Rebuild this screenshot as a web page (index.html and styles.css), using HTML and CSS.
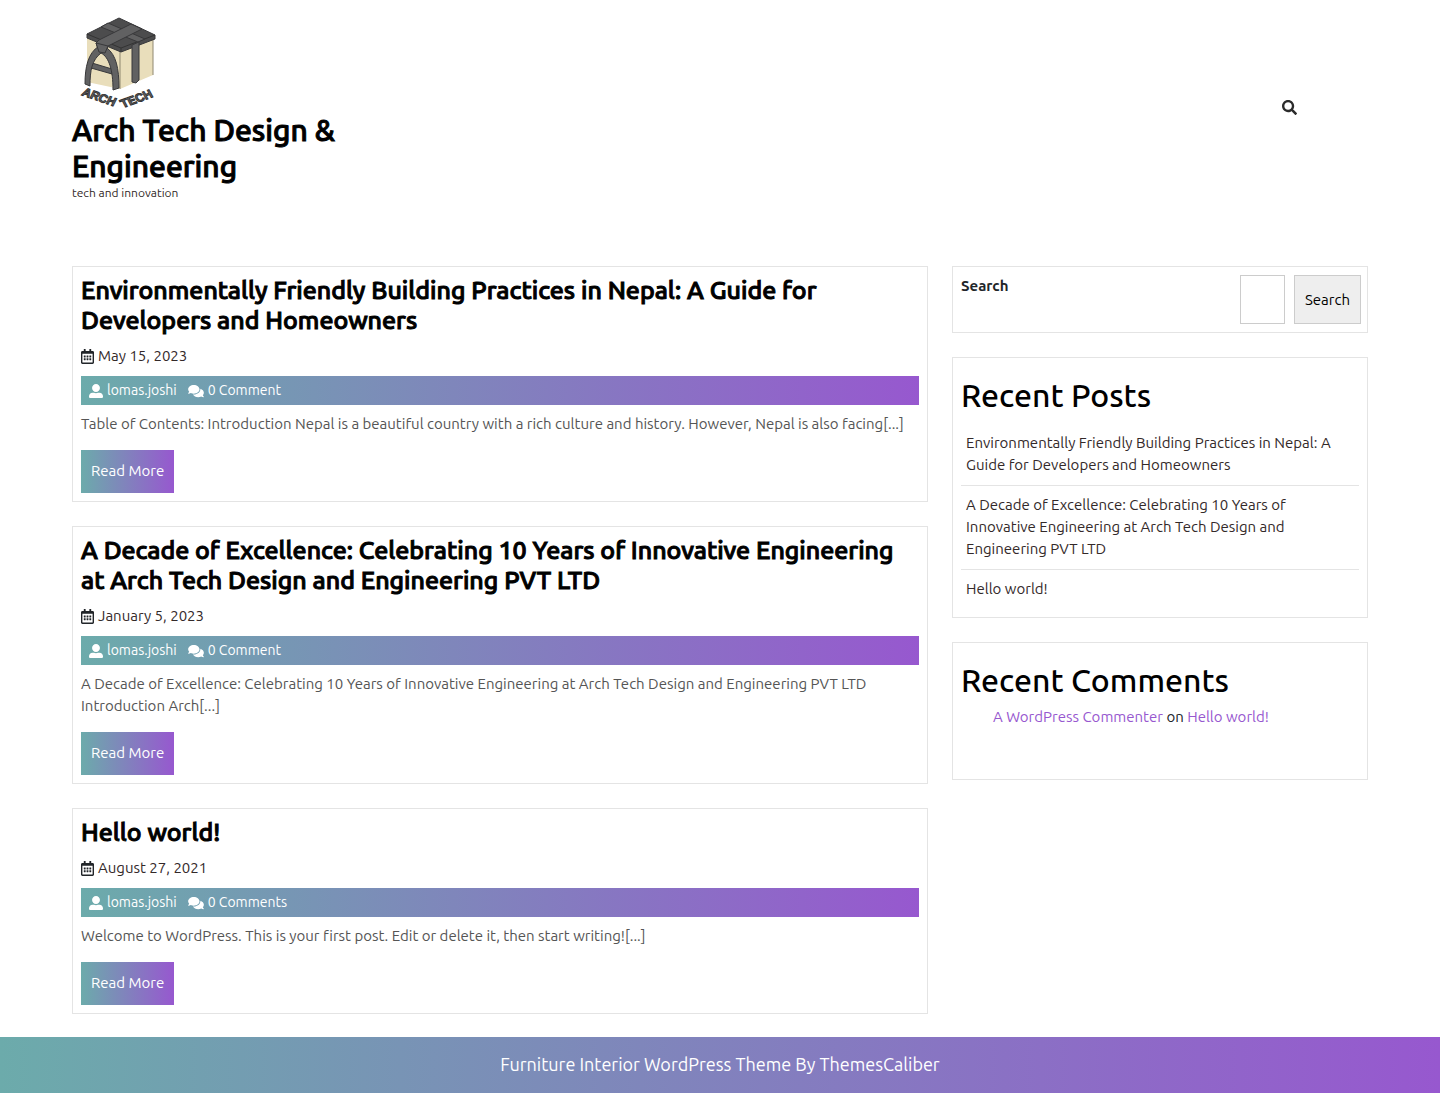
FILE: index.html
```html
<!DOCTYPE html>
<html lang="en">
<head>
<meta charset="utf-8">
<meta name="viewport" content="width=device-width, initial-scale=1">
<title>Arch Tech Design &amp; Engineering</title>
<link rel="stylesheet" href="styles.css">
</head>
<body>
<svg class="sprite" aria-hidden="true">
  <symbol id="calendar" viewBox="0 0 448 512"><path d="M148 288h-40c-6.600 0-12-5.400-12-12v-40c0-6.600 5.400-12 12-12h40c6.600 0 12 5.400 12 12v40c0 6.600-5.400 12-12 12zm108-12v-40c0-6.600-5.400-12-12-12h-40c-6.600 0-12 5.400-12 12v40c0 6.600 5.400 12 12 12h40c6.600 0 12-5.400 12-12zm96 0v-40c0-6.600-5.400-12-12-12h-40c-6.600 0-12 5.400-12 12v40c0 6.600 5.400 12 12 12h40c6.600 0 12-5.400 12-12zm-96 96v-40c0-6.600-5.400-12-12-12h-40c-6.600 0-12 5.400-12 12v40c0 6.600 5.400 12 12 12h40c6.600 0 12-5.400 12-12zm-96 0v-40c0-6.600-5.400-12-12-12h-40c-6.600 0-12 5.400-12 12v40c0 6.600 5.400 12 12 12h40c6.600 0 12-5.400 12-12zm192 0v-40c0-6.600-5.400-12-12-12h-40c-6.600 0-12 5.400-12 12v40c0 6.600 5.400 12 12 12h40c6.600 0 12-5.400 12-12zm96-260v352c0 26.500-21.500 48-48 48H48c-26.500 0-48-21.500-48-48V112c0-26.500 21.500-48 48-48h48V12c0-6.600 5.400-12 12-12h40c6.600 0 12 5.400 12 12v52h128V12c0-6.600 5.400-12 12-12h40c6.600 0 12 5.400 12 12v52h48c26.500 0 48 21.500 48 48zm-48 346V160H48v298c0 3.300 2.700 6 6 6h340c3.300 0 6-2.700 6-6z"/></symbol>
  <symbol id="user" viewBox="0 0 512 512"><path d="M256 288c79.500 0 144-64.500 144-144S335.500 0 256 0 112 64.500 112 144s64.500 144 144 144zm128 32h-55.100c-22.200 10.200-46.900 16-72.900 16s-50.600-5.800-72.900-16H128C57.300 320 0 377.300 0 448v16c0 26.500 21.500 48 48 48h416c26.500 0 48-21.500 48-48v-16c0-70.700-57.300-128-128-128z"/></symbol>
  <symbol id="comments" viewBox="0 0 576 512"><path d="M416 192c0-88.400-93.100-160-208-160S0 103.600 0 192c0 34.300 14.100 65.900 38 92-13.400 30.200-35.500 54.200-35.800 54.500-2.200 2.300-2.800 5.700-1.500 8.700S4.800 352 8 352c36.600 0 66.900-12.300 88.700-25 32.200 15.700 70.300 25 111.300 25 114.900 0 208-71.600 208-160zm122 220c23.900-26 38-57.700 38-92 0-66.900-53.500-124.200-129.300-148.100.9 6.600 1.300 13.300 1.300 20.100 0 105.900-107.700 192-240 192-10.800 0-21.300-.8-31.700-1.900C207.800 439.600 281.800 480 368 480c41 0 79.100-9.200 111.300-25 21.800 12.700 52.100 25 88.700 25 3.200 0 6.100-1.900 7.300-4.800 1.300-2.900.7-6.300-1.500-8.700-.3-.3-22.400-24.200-35.800-54.500z"/></symbol>
  <symbol id="magnifier" viewBox="0 0 512 512"><path d="M505 442.700L405.300 343c-4.500-4.500-10.600-7-17-7H372c27.600-35.300 44-79.700 44-128C416 93.100 322.900 0 208 0S0 93.100 0 208s93.100 208 208 208c48.300 0 92.700-16.400 128-44v16.300c0 6.400 2.500 12.500 7 17l99.700 99.700c9.400 9.400 24.600 9.400 33.900 0l28.300-28.300c9.400-9.400 9.400-24.600.1-34zM208 336c-70.700 0-128-57.200-128-128 0-70.700 57.200-128 128-128 70.700 0 128 57.200 128 128 0 70.700-57.200 128-128 128z"/></symbol>
</svg>

<header class="site-header container">
  <div class="brand">
    <a class="logo-link" href="#" aria-label="Arch Tech home">
      <svg class="logo" viewBox="0 0 92 100" aria-hidden="true">
        <path class="sand" d="M15 26 48 38 81 25V63L48 77 15 70Z"/>
        <path class="edge" d="M48 38V77M81 26V63"/>
        <path class="top" d="M15 22 47 6 83 23V27L49 40 15 26Z"/>
        <path class="seam" d="M15 22 49 36 83 23M49 36V40"/>
        <path class="band" d="M29 15 36 11 73 27 66 30Z"/>
        <path class="band" d="M24 31 27 28 59 12 70 17 36 34 33 41 27 40Z"/>
        <path class="leg" d="M60 33 67 30V68L64 71 60 70Z"/>
        <path class="leg" d="M20 51 40 57V62L19 56Z"/>
        <path class="leg" d="M27 34C16 41 13 55 13 72L18 74C18 58 20 48 29 41C37 45 41 58 41 78L47 76C47 56 44 43 35 36Z"/>
        <path class="leg" d="M24 31 36 34 33 41 27 40Z"/>
        <g class="wordmark">
          <text transform="translate(9 83) rotate(19) skewX(-8)">ARCH</text>
          <text transform="translate(51 96) rotate(-20) skewX(8)">TECH</text>
        </g>
      </svg>
    </a>
    <h1 class="site-title"><a href="#">Arch Tech Design &amp; Engineering</a></h1>
    <p class="tagline">tech and innovation</p>
  </div>
  <button class="search-toggle" type="button" aria-label="Open search"><svg class="icon"><use href="#magnifier"/></svg></button>
</header>

<div class="layout container">
  <main class="posts">
    <article class="card">
      <h2 class="post-title"><a href="#">Environmentally Friendly Building Practices in Nepal: A Guide for Developers and Homeowners</a></h2>
      <p class="date"><svg class="icon icon-date"><use href="#calendar"/></svg><a href="#">May 15, 2023</a></p>
      <div class="meta"><a href="#"><svg class="icon icon-user"><use href="#user"/></svg>lomas.joshi</a><span><svg class="icon icon-comments"><use href="#comments"/></svg>0 Comment</span></div>
      <p class="excerpt">Table of Contents: Introduction Nepal is a beautiful country with a rich culture and history. However, Nepal is also facing[...]</p>
      <a class="read-more" href="#">Read More</a>
    </article>
    <article class="card">
      <h2 class="post-title"><a href="#">A Decade of Excellence: Celebrating 10 Years of Innovative Engineering at Arch Tech Design and Engineering PVT LTD</a></h2>
      <p class="date"><svg class="icon icon-date"><use href="#calendar"/></svg><a href="#">January 5, 2023</a></p>
      <div class="meta"><a href="#"><svg class="icon icon-user"><use href="#user"/></svg>lomas.joshi</a><span><svg class="icon icon-comments"><use href="#comments"/></svg>0 Comment</span></div>
      <p class="excerpt">A Decade of Excellence: Celebrating 10 Years of Innovative Engineering at Arch Tech Design and Engineering PVT LTD Introduction Arch[...]</p>
      <a class="read-more" href="#">Read More</a>
    </article>
    <article class="card">
      <h2 class="post-title"><a href="#">Hello world!</a></h2>
      <p class="date"><svg class="icon icon-date"><use href="#calendar"/></svg><a href="#">August 27, 2021</a></p>
      <div class="meta"><a href="#"><svg class="icon icon-user"><use href="#user"/></svg>lomas.joshi</a><span><svg class="icon icon-comments"><use href="#comments"/></svg>0 Comments</span></div>
      <p class="excerpt">Welcome to WordPress. This is your first post. Edit or delete it, then start writing![...]</p>
      <a class="read-more" href="#">Read More</a>
    </article>
  </main>

  <aside class="sidebar">
    <form class="card search-form" role="search">
      <label for="site-search">Search</label>
      <input id="site-search" type="search">
      <button type="submit">Search</button>
    </form>
    <section class="card">
      <h2 class="widget-title">Recent Posts</h2>
      <ul class="recent-posts">
        <li><a href="#">Environmentally Friendly Building Practices in Nepal: A Guide for Developers and Homeowners</a></li>
        <li><a href="#">A Decade of Excellence: Celebrating 10 Years of Innovative Engineering at Arch Tech Design and Engineering PVT LTD</a></li>
        <li><a href="#">Hello world!</a></li>
      </ul>
    </section>
    <section class="card">
      <h2 class="widget-title">Recent Comments</h2>
      <ol class="recent-comments">
        <li><a href="#">A WordPress Commenter</a> on <a href="#">Hello world!</a></li>
      </ol>
    </section>
  </aside>
</div>

<footer class="site-footer"><a href="#">Furniture Interior WordPress Theme By ThemesCaliber</a></footer>
</body>
</html>
```
FILE: styles.css
```css
:root {
  --teal: #6cabab;
  --purple: #9758cf;
  --gradient: linear-gradient(to right, var(--teal), var(--purple));
  --line: #e4e4e4;
  --ink: #212529;
  --link: #332929;
}

*, *::before, *::after { box-sizing: border-box; }

body {
  margin: 0;
  background: #fff;
  color: var(--ink);
  font: 15px/22px Ubuntu, "Open Sans", "Noto Sans", sans-serif;
  font-variant-ligatures: none;
}

h1, h2, p, ul, ol { margin: 0; padding: 0; }
ul, ol { list-style: none; }
a { color: inherit; text-decoration: none; }
button, input { font: inherit; }

.sprite { position: absolute; width: 0; height: 0; }
.icon { fill: currentColor; flex: none; }

.container {
  width: 100%;
  max-width: 1320px;
  margin: 0 auto;
  padding: 0 12px;
}

.site-header {
  display: flex;
  align-items: center;
  justify-content: space-between;
  padding-top: 12px;
  padding-bottom: 64px;
}
.brand { flex: 0 0 306px; }
.logo-link { display: block; height: 100px; }
.logo { display: block; width: 92px; height: 100px; }
.sand { fill: #e9debb; }
.edge { fill: none; stroke: #8f8870; }
.top { fill: #4c4c4d; stroke: #38383a; stroke-linejoin: round; }
.band, .leg { fill: #616162; stroke: #38383a; stroke-linejoin: round; }
.seam { fill: none; stroke: #333; }
.wordmark {
  fill: #777;
  stroke: #333;
  font: 700 12px "Liberation Sans", Arial, sans-serif;
}
.site-title {
  color: #000;
  font-size: 30px;
  line-height: 36px;
  font-weight: 550;
  -webkit-text-stroke: 1px;
}
.tagline { color: var(--link); font-size: 12px; line-height: 18px; }
.search-toggle {
  margin-right: 71px;
  padding: 0;
  border: 0;
  background: none;
  color: #2b2b2b;
  line-height: 0;
}
.search-toggle .icon { width: 15px; height: 15px; }

.layout {
  display: grid;
  grid-template-columns: minmax(0, 856fr) minmax(0, 416fr);
  gap: 24px;
  align-items: start;
  padding-bottom: 23px;
}
.posts, .sidebar { display: grid; gap: 24px; }
.card { padding: 8px; border: 1px solid var(--line); }

.post-title {
  color: #000;
  font-size: 25px;
  line-height: 30px;
  font-weight: 550;
  -webkit-text-stroke: 1px;
}
.date {
  display: flex;
  align-items: center;
  gap: 4px;
  margin: 10px 0 9px;
  color: var(--link);
}
.icon-date { width: 13px; height: 15px; color: var(--ink); }
.meta {
  display: flex;
  gap: 11px;
  padding: 4px 8px;
  background: var(--gradient);
  color: #fff;
  font-size: 14px;
  line-height: 21px;
}
.meta a, .meta span { display: flex; align-items: center; gap: 4px; }
.icon-user { width: 14px; height: 14px; }
.icon-comments { width: 16px; height: 14px; }
.excerpt { margin: 8px 0 15px; color: #555; }
.read-more {
  display: inline-block;
  padding: 10px 10px 11px;
  background: var(--gradient);
  color: #fff;
  vertical-align: top;
}

.search-form {
  display: flex;
  gap: 9px;
  padding-right: 6px;
}
.search-form label { flex: 1; font-weight: 700; }
.search-form input {
  width: 45px;
  height: 49px;
  padding: 0 8px;
  border: 1px solid #ccc;
  background: #fff;
}
.search-form button {
  padding: 0 10px;
  border: 1px solid #ccc;
  background: #eee;
  color: #000;
}

.widget-title {
  padding-top: 10px;
  color: #000;
  font-size: 32px;
  line-height: 38px;
  font-weight: 500;
}
.recent-posts { padding-top: 10px; }
.recent-posts li { padding: 8px 5px 9px; color: var(--link); }
.recent-posts li + li { border-top: 1px solid var(--line); }
.recent-comments { padding: 7px 0 43px 32px; }
.recent-comments a { color: var(--purple); }

.site-footer {
  padding: 16px 12px 18px;
  background: var(--gradient);
  color: #fff;
  font-size: 18px;
  line-height: 22px;
  text-align: center;
}
```
